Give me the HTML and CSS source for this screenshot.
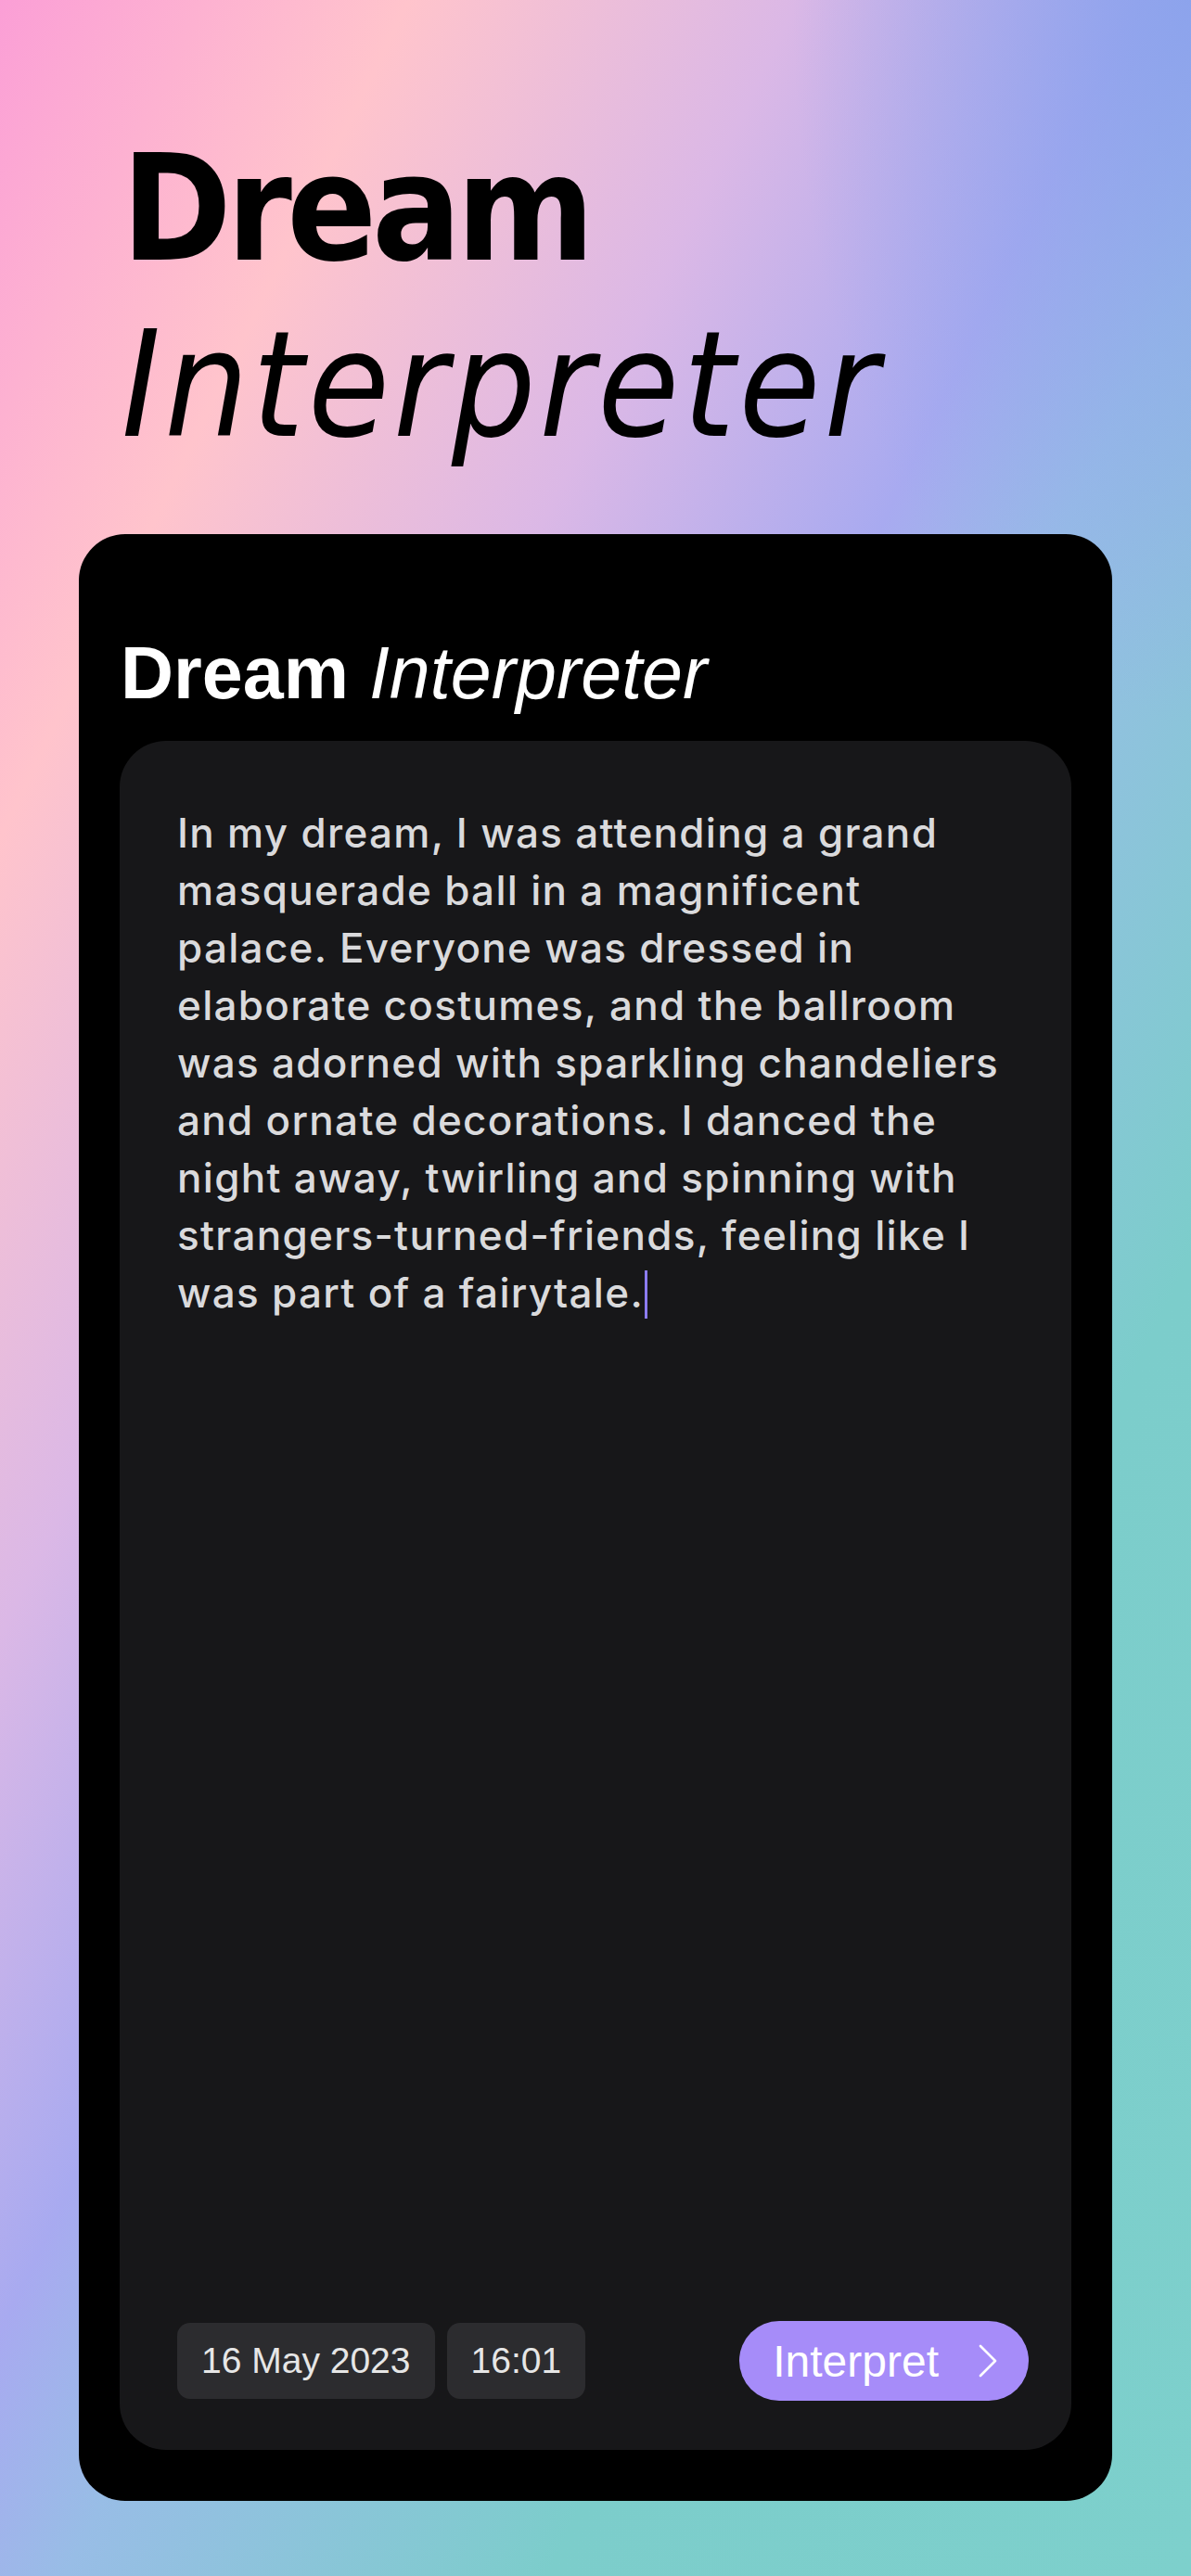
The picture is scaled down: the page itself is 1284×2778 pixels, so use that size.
FILE: index.html
```html
<!DOCTYPE html>
<html lang="en">
<head>
<meta charset="utf-8">
<title>Dream Interpreter</title>
<link rel="stylesheet" href="styles.css">
</head>
<body>
<main class="page">
  <h1 class="hero">
    <span class="hero-bold">Dream</span>
    <span class="hero-italic">Interpreter</span>
  </h1>
  <section class="phone">
    <h2 class="app-title"><b>Dream</b> <i>Interpreter</i></h2>
    <div class="editor">
      <p class="dream-text">In my dream, I was attending a grand<br>masquerade ball in a magnificent<br>palace. Everyone was dressed in<br>elaborate costumes, and the ballroom<br>was adorned with sparkling chandeliers<br>and ornate decorations. I danced the<br>night away, twirling and spinning with<br>strangers-turned-friends, feeling like I<br>was part of a fairytale.<span class="caret"></span></p>
      <div class="editor-footer">
        <div class="chips">
          <span class="chip">16 May 2023</span>
          <span class="chip">16:01</span>
        </div>
        <button class="interpret">
          <span>Interpret</span>
          <svg class="chev" viewBox="0 0 22 36" width="22" height="36"><path d="M3 2 L19 18 L3 34" fill="none" stroke="#fff" stroke-width="2.6" stroke-linecap="round" stroke-linejoin="round"/></svg>
        </button>
      </div>
    </div>
  </section>
</main>
</body>
</html>
```
FILE: styles.css
```css
html, body {
  margin: 0;
  padding: 0;
}
body {
  width: 1284px;
  height: 2778px;
  overflow: hidden;
  background:
    radial-gradient(ellipse 430px 780px at 100% 0%, rgba(138, 162, 236, 0.9) 0%, rgba(138, 162, 236, 0.45) 45%, rgba(138, 162, 236, 0) 100%),
    linear-gradient(116deg,
      #fb9fd6 0%,
      #ffc4cc 16.7%,
      #dbb8e6 32.6%,
      #a8aaf0 46.5%,
      #98bde6 54%,
      #7ccdcb 73.7%,
      #7dd0cc 100%);
  font-family: "Liberation Sans", Arial, sans-serif;
}
.page {
  display: flex;
  flex-direction: column;
  padding: 130px 0 0 0;
}
.hero {
  margin: 0 0 66px 0;
  padding-left: 131px;
  font-family: "DejaVu Sans Condensed", "DejaVu Sans", sans-serif;
  font-size: 159px;
  line-height: 190px;
  color: #000;
  font-weight: normal;
}
.hero-bold {
  display: block;
  font-weight: bold;
  letter-spacing: -5.5px;
}
.hero-italic {
  display: block;
  font-style: italic;
  font-weight: normal;
  letter-spacing: 4px;
}
.phone {
  margin-left: 85px;
  width: 1114px;
  height: 2121px;
  box-sizing: border-box;
  background: #000;
  border-radius: 50px;
  padding: 112px 44px 55px 44px;
  display: flex;
  flex-direction: column;
}
.app-title {
  margin: 0 0 35px 0;
  font-size: 79px;
  line-height: 76px;
  color: #fff;
  font-weight: normal;
  padding-left: 1px;
}
.app-title b {
  font-weight: bold;
}
.app-title i {
  font-style: italic;
  font-weight: normal;
}
.editor {
  flex: 1;
  background: #171719;
  border-radius: 50px;
  padding: 68px 46px 53px 62px;
  display: flex;
  flex-direction: column;
}
.dream-text {
  margin: 0;
  flex: 1;
  font-family: Inter, "Liberation Sans", sans-serif;
  font-size: 44px;
  font-weight: 500;
  letter-spacing: 1.3px;
  line-height: 62px;
  color: #dadadc;
  white-space: nowrap;
}
.caret {
  display: inline-block;
  width: 3px;
  height: 52px;
  background: #8c7cf0;
  vertical-align: -12px;
  margin-left: 1px;
}
.editor-footer {
  display: flex;
  align-items: center;
  justify-content: space-between;
}
.chips {
  display: flex;
  gap: 13px;
}
.chip {
  height: 82px;
  box-sizing: border-box;
  padding: 0 26px;
  display: flex;
  align-items: center;
  background: #2c2c2f;
  border-radius: 14px;
  color: #e6e6e6;
  font-size: 39px;
}
.interpret {
  height: 86px;
  box-sizing: border-box;
  padding: 0 33px 0 36px;
  border: none;
  border-radius: 43px;
  background: #a68cf9;
  color: #fff;
  font-family: "Liberation Sans", Arial, sans-serif;
  font-size: 48px;
  display: flex;
  align-items: center;
  gap: 42px;
}
.chev {
  display: block;
}
```
